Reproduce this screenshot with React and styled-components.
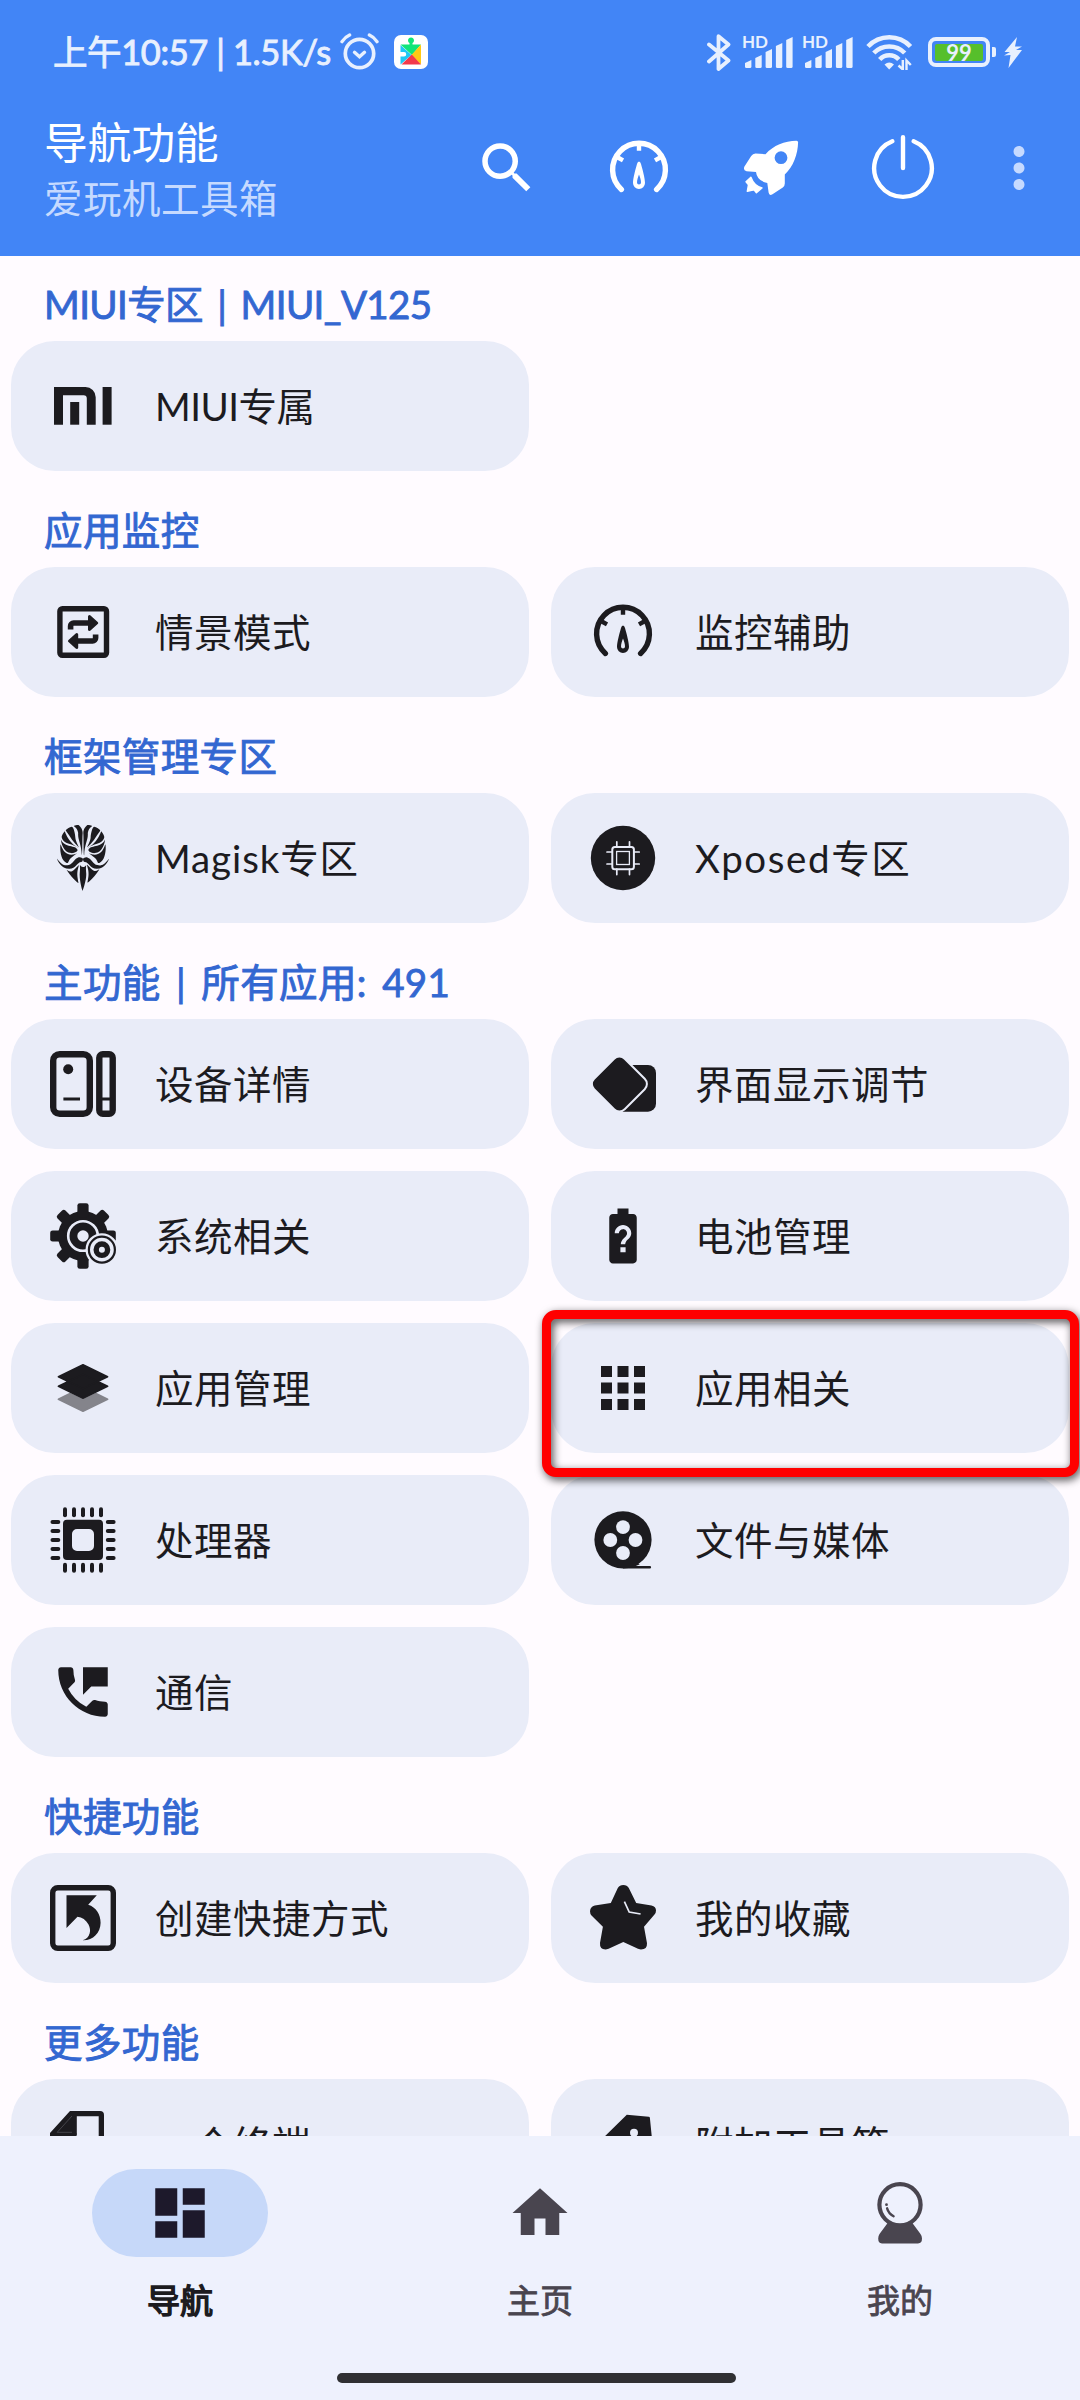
import styled, { createGlobalStyle } from 'styled-components';
import { MdApps, MdBatteryUnknown, MdDashboard, MdHome, MdMoreVert, MdPermPhoneMsg, MdSearch } from 'react-icons/md';
import { SiMagisk } from 'react-icons/si';

const GlobalStyle = createGlobalStyle`
  * {
    box-sizing: border-box;
  }
  body {
    margin: 0;
    background: #fffbff;
    font-family: Lato, 'Noto Sans CJK SC', sans-serif;
  }
  h1, h2, p {
    margin: 0;
  }
`;

const Screen = styled.div`
  display: flex;
  flex-direction: column;
  width: 1080px;
  height: 2400px;
  overflow: hidden;
  background: #fffbff;
`;

const Header = styled.header`
  flex: none;
  height: 256px;
  background: #4285f6;
  color: #fff;
`;

const StatusBar = styled.div`
  display: flex;
  align-items: center;
  height: 104px;
  padding: 0 58px 0 53px;
  color: #e8f0fe;
`;

const Clock = styled.span`
  width: 287px;
  font-size: 34.5px;
  line-height: 40px;
  white-space: nowrap;
  letter-spacing: -0.4px;
  -webkit-text-stroke: 0.9px currentColor;
`;

const StatusIcons = styled.div`
  display: flex;
  align-items: center;
  margin-left: auto;
`;

const Signal = styled.div`
  position: relative;
  width: 48px;
  height: 32px;
  margin-left: ${(props) => props.$gap}px;

  svg {
    display: block;
  }
`;

const HdBadge = styled.span`
  position: absolute;
  top: -3px;
  left: -3px;
  font-size: 17px;
  font-weight: 700;
  line-height: 17px;
`;

const Battery = styled.div`
  display: flex;
  align-items: center;
  justify-content: center;
  width: 62px;
  height: 30px;
  margin-left: 15px;
  padding: 3px;
  border: 4px solid #e8f0fe;
  border-radius: 8px;
`;

const BatteryLevel = styled.div`
  width: 48px;
  height: 17px;
  border-radius: 2px;
  background: #56bf2b;
  font-size: 22px;
  font-weight: 700;
  line-height: 17px;
  text-align: center;
`;

const BatteryCap = styled.div`
  width: 4px;
  height: 10px;
  margin: 0 8px 0 2px;
  border-radius: 0 2px 2px 0;
  background: #e8f0fe;
`;

const Toolbar = styled.div`
  display: flex;
  align-items: center;
  height: 128px;
  padding: 0 28px 0 44px;
`;

const Titles = styled.div`
  flex: 1;
`;

const Title = styled.h1`
  font-size: 43.7px;
  font-weight: 400;
  line-height: 60px;
`;

const Subtitle = styled.p`
  color: #c6daff;
  font-size: 38.5px;
  line-height: 52px;
  letter-spacing: 0.5px;
`;

const Actions = styled.div`
  display: flex;
  align-items: center;
  gap: 66px;

  svg {
    display: block;
  }
`;

const MoreButton = styled.div`
  margin-left: -16px;
  color: #c6daff;
`;

const Content = styled.main`
  flex: 1;
  min-height: 0;
  overflow: hidden;
`;

const Section = styled.section`
  padding: 0 11px;

  & + & {
    margin-top: 11px;
  }
`;

const SectionTitle = styled.h2`
  height: 85px;
  padding: 19px 33px 0;
  color: #3367d1;
  font-size: 38.5px;
  font-weight: 400;
  line-height: 58px;
  white-space: pre;
  word-spacing: 5px;
  letter-spacing: ${(props) => props.$spacing ?? 0.4}px;
  -webkit-text-stroke: 0.9px currentColor;
`;

const Grid = styled.div`
  display: grid;
  grid-template-columns: repeat(2, 518px);
  gap: 22px;
`;

const Card = styled.div`
  position: relative;
  display: flex;
  align-items: center;
  gap: 39px;
  height: 130px;
  padding-left: 39px;
  border-radius: 44px;
  background: #e9ecf8;
  color: #1c1b1f;

  svg {
    flex: none;
  }
`;

const CardLabel = styled.span`
  font-size: 38.5px;
  line-height: 58px;
  white-space: nowrap;
  letter-spacing: ${(props) => props.$spacing ?? 0.5}px;
`;

// 红色标注框，盖在卡片之上
const Highlight = styled.div`
  position: absolute;
  z-index: 1;
  top: -13px;
  left: -9px;
  width: 537px;
  height: 167px;
  border: 9px solid #ff0000;
  border-radius: 14px;
  filter: drop-shadow(2px 3px 4px rgba(0, 0, 0, 0.7));
`;

const BottomNav = styled.nav`
  position: relative;
  display: flex;
  flex: none;
  height: 264px;
  background: #eef1fd;
`;

const NavItem = styled.div`
  display: flex;
  flex: 1;
  flex-direction: column;
  align-items: center;
  padding-top: 33px;
  color: ${(props) => (props.$active ? '#1c1b1f' : '#49454f')};
`;

const NavPill = styled.div`
  display: flex;
  align-items: center;
  justify-content: center;
  width: 176px;
  height: 88px;
  border-radius: 44px;
  background: ${(props) => (props.$active ? '#c6d8f9' : 'transparent')};
`;

const NavLabel = styled.span`
  margin-top: 20px;
  font-size: 33px;
  line-height: 46px;
  -webkit-text-stroke: ${(props) => (props.$active ? 1.5 : 0.8)}px currentColor;
`;

const HomeIndicator = styled.div`
  position: absolute;
  bottom: 17px;
  left: 337px;
  width: 399px;
  height: 10px;
  border-radius: 5px;
  background: #303033;
`;

const Icon = ({ children, ...rest }) => (
  <svg width="66" height="66" viewBox="0 0 66 66" fill="currentColor" {...rest}>
    {children}
  </svg>
);

const MiIcon = () => (
  <Icon>
    <path d="M4 14H35.5A10.2 10.2 0 0 1 45.7 24.2V51.7H36.8V25.5A3.2 3.2 0 0 0 33.6 22.3H13V51.7H4Z" />
    <rect x="20.2" y="29" width="9" height="22.7" />
    <rect x="52.6" y="14" width="9" height="37.7" />
  </Icon>
);

const SceneIcon = () => (
  <Icon>
    <rect x="9.9" y="9.7" width="46.6" height="46.6" rx="2.5" fill="none" stroke="currentColor" strokeWidth="5.4" />
    <path d="M20.6 30.5V27a3 3 0 0 1 3-3H40M45.6 35.5V39a3 3 0 0 1-3 3H26" fill="none" stroke="currentColor" strokeWidth="5.6" />
    <path
      d="M39.5 17.5L46.7 24L39.5 30.5ZM26.7 35.5L19.5 42L26.7 48.5Z"
      stroke="currentColor"
      strokeWidth="3"
      strokeLinejoin="round"
    />
  </Icon>
);

const GaugeIcon = () => (
  <Icon>
    <path
      d="M15.4 54.4A26.4 26.4 0 1 1 50.6 54.4"
      fill="none"
      stroke="currentColor"
      strokeWidth="5.4"
      strokeLinecap="round"
    />
    <path d="M33 8V15.7M11 22L17 25.4M55 22L49 25.4" fill="none" stroke="currentColor" strokeWidth="4.4" />
    <path
      fillRule="evenodd"
      d="M33 26.5Q34.4 26.5 35 29C36.5 34.5 39 43 39 48A6 6 0 0 1 27 48C27 43 29.5 34.5 31 29Q31.6 26.5 33 26.5ZM33 39.5C32 42 31 45 31 47.5A2 2 0 0 0 35 47.5C35 45 34 42 33 39.5Z"
    />
  </Icon>
);

const RocketIcon = () => (
  <Icon>
    <path
      fillRule="evenodd"
      d="M58.5 5.8Q60.2 5.8 60.1 7.5C59.8 19 55.5 31.5 46.8 39.5V48.5Q46.8 51 44.8 52.5L34.5 59.2Q31.2 61.2 30.6 57.5L29.3 47.9Q19 46 18 37L8.5 36.3Q5 35.5 6.3 31.8L13.2 21Q14.8 18.7 17.5 18.6L27.5 19.2C35.5 10.5 46.5 5.9 58.5 5.8ZM43 16.3A6.4 6.4 0 1 0 43 29.1A6.4 6.4 0 1 0 43 16.3Z"
    />
    <path
      d="M12.9 42.2L8 46.7L10.5 49.7L9.3 56.3L16 54.9L18.4 57.7L24 52.9C18.5 51.5 14.8 47.5 12.9 42.2Z"
      stroke="currentColor"
      strokeWidth="1.4"
      strokeLinejoin="round"
    />
  </Icon>
);

const PowerIcon = () => (
  <Icon fill="none" stroke="currentColor" strokeWidth="4.4" strokeLinecap="round">
    <path d="M22.3 6.3A28.8 28.8 0 1 0 43.7 6.3M33 2.2V33" />
  </Icon>
);

const XposedIcon = () => (
  <Icon>
    <circle cx="33" cy="33" r="32.2" />
    <g fill="none" stroke="#e9ecf8" strokeLinecap="round">
      <rect x="22.3" y="22" width="21.6" height="22.2" rx="2.5" strokeWidth="2" />
      <rect x="26.6" y="26.5" width="12.8" height="13" strokeWidth="1.3" />
      <path
        d="M26.8 16.8V22M39.5 16.8V22M26.8 44V49.6M39.5 44V49.6M17 27H22M17 39H22M44 27H49.2M44 39H49.2"
        strokeWidth="1.7"
      />
    </g>
  </Icon>
);

const DeviceIcon = () => (
  <Icon fill="none" stroke="currentColor">
    <rect x="3.2" y="3.2" width="36.6" height="59.6" rx="6.5" strokeWidth="6.4" />
    <rect x="49.3" y="3.2" width="13.4" height="59.6" rx="3.5" strokeWidth="6.4" />
    <path d="M13.4 48H30M50 48H62" strokeWidth="3" />
    <circle cx="18.2" cy="18.3" r="5" fill="currentColor" stroke="none" />
  </Icon>
);

const DisplayIcon = () => (
  <Icon>
    <path d="M41 14H58A8 8 0 0 1 66 22V52.7A8 8 0 0 1 58 60.7H32.5Z" />
    <rect
      x="8.75"
      y="12.35"
      width="41.3"
      height="41.3"
      rx="6.5"
      transform="rotate(45 29.4 33)"
      stroke="#e9ecf8"
      strokeWidth="4"
      paintOrder="stroke"
    />
  </Icon>
);

const GearIcon = () => (
  <Icon>
    <circle cx="33" cy="33" r="25" />
    {[0, 45, 90, 135, 180, 225, 270, 315].map((angle) => (
      <rect key={angle} x="27.4" y="0.2" width="11.2" height="14" rx="2.4" transform={`rotate(${angle} 33 33)`} />
    ))}
    <circle cx="33" cy="33" r="14.8" fill="none" stroke="#e9ecf8" strokeWidth="2.6" />
    <circle cx="33" cy="33" r="5.7" fill="#e9ecf8" />
    <circle cx="51.9" cy="46.7" r="16.4" fill="#e9ecf8" />
    <circle cx="51.9" cy="46.7" r="13" fill="none" stroke="currentColor" strokeWidth="2.2" />
    <circle cx="51.9" cy="46.7" r="5.7" fill="none" stroke="currentColor" strokeWidth="5.4" />
  </Icon>
);

const LayersIcon = () => (
  <Icon stroke="currentColor" strokeWidth="1.6" strokeLinejoin="round">
    <path d="M46 38.5L57.6 44.3L33 56.2L8.4 44.3L20 38.5L33 44.8Z" fill="#84848b" stroke="#84848b" />
    <path d="M33 9.8L57.6 21.7L33 33.6L8.4 21.7ZM33 19.4L57.6 31.3L33 43.2L8.4 31.3Z" />
  </Icon>
);

const CpuIcon = () => (
  <Icon>
    <path
      fillRule="evenodd"
      d="M17 12.7H49A4 4 0 0 1 53 16.7V49A4 4 0 0 1 49 53H17A4 4 0 0 1 13 49V16.7A4 4 0 0 1 17 12.7ZM27 22A5 5 0 0 0 22 27V39A5 5 0 0 0 27 44H39A5 5 0 0 0 44 39V27A5 5 0 0 0 39 22Z"
    />
    {[15, 24, 33, 42, 51].map((pos) => (
      <g key={pos}>
        <rect x={pos - 2} y="0.3" width="4" height="10" rx="2" />
        <rect x={pos - 2} y="55.7" width="4" height="10" rx="2" />
        <rect x="0.5" y={pos - 2} width="9.8" height="4" rx="2" />
        <rect x="55.8" y={pos - 2} width="9.8" height="4" rx="2" />
      </g>
    ))}
  </Icon>
);

const ReelIcon = () => (
  <Icon>
    <circle cx="33" cy="32.8" r="28.6" />
    <path d="M33 61.6V57H50C48 58 47 58.4 46 59H59.8A1.3 1.3 0 0 1 59.8 61.6Z" />
    <g fill="#e9ecf8">
      <circle cx="33" cy="20.1" r="6.9" />
      <circle cx="20.3" cy="33" r="6.9" />
      <circle cx="45.5" cy="33" r="6.9" />
      <circle cx="33" cy="46" r="6.9" />
    </g>
  </Icon>
);

const ShortcutIcon = () => (
  <Icon>
    <rect x="2.7" y="2.7" width="60.6" height="60.6" rx="5" fill="none" stroke="currentColor" strokeWidth="5.4" />
    <path d="M16.5 10.3H46.8L38.2 19.7C46 22 50.6 29.5 50.6 37.7C50.6 48 42.5 55.8 32.6 55.3C40.5 53 41.5 45 38.5 39.5C36 34.8 32 32.2 27.5 31.7L16.5 43Z" />
  </Icon>
);

const StarIcon = () => (
  <Icon>
    <path d="M27.8 3Q29.5 0 33.3 0Q37.1 0 38.8 3L46.2 17.9L61.5 20.4Q66 21.4 66 25.5Q66 28 64.5 29.5L54 41.7L57 58.3Q57.3 64.5 51 64.6Q50 64.6 48 63.8L33.3 57L18.6 63.8Q16.5 64.6 15.5 64.6Q9.5 64.3 10 58L12.9 41.7L1.5 30.5Q0 28.8 0 26.2Q0.4 21.6 4.8 20.6L20.8 17.9Z" />
    <path d="M34.4 16.7L39.2 27L50.6 29" fill="none" stroke="#e9ecf8" strokeWidth="1.7" />
  </Icon>
);

const TerminalIcon = () => (
  <Icon>
    <path d="M20 0H50A4 4 0 0 1 54 4V62A4 4 0 0 1 50 66H4A4 4 0 0 1 0 62V22ZM26.8 5.3V22A4 4 0 0 1 22.8 27H5.3V60.7H48.7V5.3Z" fillRule="evenodd" />
    <path d="M22 5L7.2 21.3H22" fill="none" stroke="#55555b" strokeWidth="0.7" />
  </Icon>
);

const TagIcon = () => (
  <Icon>
    <path d="M36.8 3.7L58.8 5.7Q59.8 5.8 59.9 7L62.5 33L36 62L6 34Z" />
    <circle cx="44" cy="21.7" r="4" fill="#e9ecf8" />
  </Icon>
);

const CrystalIcon = () => (
  <Icon>
    <circle cx="33" cy="24.8" r="20.6" fill="none" stroke="currentColor" strokeWidth="4.2" />
    <path d="M21 42.5Q33 49 45 42.5L53.5 54Q55 56 55 58.5Q55 63.4 51 63.4H15Q11.2 63.4 11.2 58.5Q11.2 56 12.5 54Z" />
    <path d="M20.1 28.3Q21.6 33.5 26.6 36.2" fill="none" stroke="currentColor" strokeWidth="2.4" strokeLinecap="round" />
    <circle cx="19.5" cy="24.7" r="1.4" />
  </Icon>
);

const AlarmIcon = () => (
  <svg width="39" height="38" viewBox="0 0 39 38" fill="none" stroke="currentColor" strokeLinecap="round">
    <circle cx="19.5" cy="20.5" r="14.2" strokeWidth="3.7" />
    <path d="M14.5 19.3L19.5 23.8L24.5 19.3" strokeWidth="3.4" />
    <path d="M2 8.6Q5 4 9.6 2M37 8.6Q34 4 29.4 2" strokeWidth="3.4" />
  </svg>
);

const PlayBadge = styled.svg`
  width: 34px;
  height: 34px;
  margin-left: 15px;
`;

const PlayServicesIcon = () => (
  <PlayBadge viewBox="0 0 34 34">
    <rect width="34" height="34" rx="7" fill="#fff" />
    <path d="M6.5 10L17.5 20L6.5 29.5V21.5H10A2.2 2.2 0 0 0 10 17H6.5Z" fill="#1ec8f5" />
    <path d="M6.5 9.5H15.5V8A3 3 0 1 1 18.5 8V9.5H27L18 20Z" fill="#0fe578" />
    <path d="M27 9.5V29.5L17.5 20Z" fill="#ffc914" />
    <path d="M17.8 19.5L27 29.5H7.5Z" fill="#f2394b" />
  </PlayBadge>
);

const BluetoothIcon = () => (
  <svg width="24" height="39" viewBox="0 0 24 39" fill="none" stroke="currentColor" strokeWidth="3.8">
    <path d="M2 11.5L21.5 27.5L11.5 36V3.2L21.5 11.5L2 28.5" strokeLinecap="round" strokeLinejoin="round" />
  </svg>
);

const SignalBars = ({ gap }) => (
  <Signal $gap={gap}>
    <HdBadge>HD</HdBadge>
    <svg width="48" height="32" viewBox="0 0 48 32" fill="currentColor">
      {[8, 13, 19, 25, 31].map((height, i) => (
        <path
          key={height}
          d={`M${i * 10.3} ${35 - height}L${i * 10.3 + 6.4} ${32 - height}V30.5Q${i * 10.3 + 6.4} 32 ${i * 10.3 + 5} 32H${i * 10.3 + 1.4}Q${i * 10.3} 32 ${i * 10.3} 30.5Z`}
        />
      ))}
    </svg>
  </Signal>
);

const WifiMark = styled.svg`
  width: 47px;
  height: 36px;
  margin-left: 13px;
`;

const WifiIcon = () => (
  <WifiMark viewBox="0 0 47 36" fill="none" stroke="currentColor" strokeWidth="4.6">
    <path d="M2 12.5A29 29 0 0 1 44.5 12.5M7.8 19A21.5 21.5 0 0 1 38.7 19M13.7 25.5A13 13 0 0 1 32.8 25.5" />
    <path d="M18.5 30.5Q23.2 26.5 28 30.5L23.2 35.5Z" fill="currentColor" stroke="none" />
    <path d="M36.8 26V35.5L32.5 31.5M40.5 36V26.5L44.8 31" strokeWidth="2.4" />
  </WifiMark>
);

const BoltIcon = () => (
  <svg width="18" height="31" viewBox="0 0 18 31" fill="currentColor">
    <path d="M13 0L0.5 15H6L0 18.5L6.5 18L4.5 31L18 13H12L18 9.5H11Z" />
  </svg>
);

const sections = [
  {
    title: 'MIUI专区 | MIUI_V125',
    spacing: -0.6,
    items: [{ label: 'MIUI专属', icon: <MiIcon />, spacing: -0.5 }],
  },
  {
    title: '应用监控',
    items: [
      { label: '情景模式', icon: <SceneIcon /> },
      { label: '监控辅助', icon: <GaugeIcon /> },
    ],
  },
  {
    title: '框架管理专区',
    items: [
      { label: 'Magisk专区', icon: <SiMagisk size={66} />, spacing: 0.9 },
      { label: 'Xposed专区', icon: <XposedIcon />, spacing: 1.6 },
    ],
  },
  {
    title: '主功能 | 所有应用: 491',
    items: [
      { label: '设备详情', icon: <DeviceIcon /> },
      { label: '界面显示调节', icon: <DisplayIcon /> },
      { label: '系统相关', icon: <GearIcon /> },
      { label: '电池管理', icon: <MdBatteryUnknown size={66} /> },
      { label: '应用管理', icon: <LayersIcon /> },
      { label: '应用相关', icon: <MdApps size={66} />, highlight: true },
      { label: '处理器', icon: <CpuIcon /> },
      { label: '文件与媒体', icon: <ReelIcon /> },
      { label: '通信', icon: <MdPermPhoneMsg size={66} /> },
    ],
  },
  {
    title: '快捷功能',
    items: [
      { label: '创建快捷方式', icon: <ShortcutIcon /> },
      { label: '我的收藏', icon: <StarIcon /> },
    ],
  },
  {
    title: '更多功能',
    items: [
      { label: '一个终端', icon: <TerminalIcon /> },
      { label: '附加工具箱', icon: <TagIcon /> },
    ],
  },
];

const tabs = [
  { label: '导航', icon: <MdDashboard size={66} color="#1d192b" />, active: true },
  { label: '主页', icon: <MdHome size={66} /> },
  { label: '我的', icon: <CrystalIcon /> },
];

const App = () => (
  <Screen>
    <GlobalStyle />
    <Header>
      <StatusBar>
        <Clock>上午10:57 | 1.5K/s</Clock>
        <AlarmIcon />
        <PlayServicesIcon />
        <StatusIcons>
          <BluetoothIcon />
          <SignalBars gap={14} />
          <SignalBars gap={12} />
          <WifiIcon />
          <Battery>
            <BatteryLevel>99</BatteryLevel>
          </Battery>
          <BatteryCap />
          <BoltIcon />
        </StatusIcons>
      </StatusBar>
      <Toolbar>
        <Titles>
          <Title>导航功能</Title>
          <Subtitle>爱玩机工具箱</Subtitle>
        </Titles>
        <Actions>
          <MdSearch size={66} />
          <GaugeIcon />
          <RocketIcon />
          <PowerIcon />
          <MoreButton>
            <MdMoreVert size={66} />
          </MoreButton>
        </Actions>
      </Toolbar>
    </Header>
    <Content>
      {sections.map((section) => (
        <Section key={section.title}>
          <SectionTitle $spacing={section.spacing}>{section.title}</SectionTitle>
          <Grid>
            {section.items.map((item) => (
              <Card key={item.label}>
                {item.icon}
                <CardLabel $spacing={item.spacing}>{item.label}</CardLabel>
                {item.highlight && <Highlight />}
              </Card>
            ))}
          </Grid>
        </Section>
      ))}
    </Content>
    <BottomNav>
      {tabs.map((tab) => (
        <NavItem key={tab.label} $active={tab.active}>
          <NavPill $active={tab.active}>{tab.icon}</NavPill>
          <NavLabel $active={tab.active}>{tab.label}</NavLabel>
        </NavItem>
      ))}
      <HomeIndicator />
    </BottomNav>
  </Screen>
);

export default App;
